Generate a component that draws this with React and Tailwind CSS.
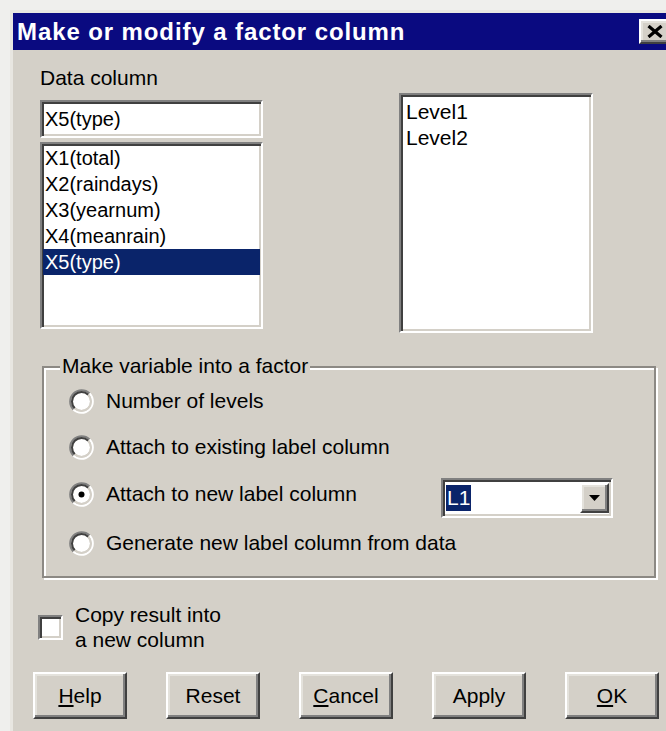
import React, { useState } from "react";

const sunken =
  "bg-white border-2 border-t-[#808080] border-l-[#808080] border-r-white border-b-white shadow-[inset_2px_2px_0_#404040,inset_-2px_-2px_0_#d4d0c8]";
const raised =
  "bg-[#d4d0c8] border-2 border-t-white border-l-white border-r-[#404040] border-b-[#404040] shadow-[inset_-2px_-2px_0_#808080,inset_2px_2px_0_#e4e2dc]";

function Radio({ checked }) {
  return (
    <svg width="25" height="25" viewBox="0 0 25 25" className="shrink-0">
      <path d="M4.37 20.63 A11.5 11.5 0 0 1 20.63 4.37" fill="none" stroke="#808080" strokeWidth="2" />
      <path d="M20.63 4.37 A11.5 11.5 0 0 1 4.37 20.63" fill="none" stroke="#ffffff" strokeWidth="2" />
      <circle cx="12.5" cy="12.5" r="8.5" fill="#ffffff" />
      <path d="M5.78 19.22 A9.5 9.5 0 0 1 19.22 5.78" fill="none" stroke="#404040" strokeWidth="2" />
      <path d="M19.22 5.78 A9.5 9.5 0 0 1 5.78 19.22" fill="none" stroke="#d4d0c8" strokeWidth="2" />
      {checked && <circle cx="12.5" cy="12.5" r="3" fill="#000000" />}
    </svg>
  );
}

function Btn({ children }) {
  return (
    <button className={`${raised} w-[94px] h-[47px] flex items-center justify-center text-[21px] text-black`}>
      {children}
    </button>
  );
}

function App() {
  const [mode, setMode] = useState(2);
  const [copy, setCopy] = useState(false);
  const columns = ["X1(total)", "X2(raindays)", "X3(yearnum)", "X4(meanrain)", "X5(type)"];
  const options = [
    "Number of levels",
    "Attach to existing label column",
    "Attach to new label column",
    "Generate new label column from data",
  ];
  const rowHeights = ["h-[46px]", "h-[46px]", "h-[48px]", "h-[50px]"];

  return (
    <div
      className="w-[666px] h-[731px] overflow-hidden bg-[#efefed] pt-[10px] pl-[10px]"
      style={{ fontFamily: '"Liberation Sans", Arial, sans-serif' }}
    >
      <div className="w-[670px] h-[721px] bg-[#d4d0c8] border-t-[3px] border-l-[3px] border-[#e8e6e1] flex flex-col">
        {/* caption */}
        <div className="h-[37px] bg-[#0a0a80] flex items-center pl-[4px]">
          <span className="text-white font-bold text-[24px] tracking-[0.9px] leading-none">
            Make or modify a factor column
          </span>
          <div className={`${raised} ml-auto mr-[3px] w-[38px] h-[25px] flex items-center justify-start pl-[6px]`}>
            <svg width="16" height="13" viewBox="0 0 16 13">
              <path d="M1.5 1 L14.5 12 M14.5 1 L1.5 12" stroke="#000" strokeWidth="3.2" />
            </svg>
          </div>
        </div>

        {/* column pickers */}
        <div className="flex items-start pl-[27px] text-black">
          <div className="w-[223px] flex flex-col">
            <div className="mt-[16px] text-[21px] leading-[24px]">Data column</div>
            <div className={`${sunken} mt-[10px] h-[38px] flex items-center pl-[3px] text-[20px]`}>X5(type)</div>
            <div className={`${sunken} mt-[4px] h-[187px] pt-[1px] px-[1px] text-[20px] leading-[26px]`}>
              {columns.map((c, i) => (
                <div key={c} className={i === 4 ? "bg-[#0a246a] text-white pl-[2px]" : "pl-[2px]"}>
                  {c}
                </div>
              ))}
            </div>
          </div>
          <div className={`${sunken} ml-[136px] mt-[43px] w-[194px] h-[240px] pt-[4px] pl-[5px] text-[21px] leading-[26px]`}>
            <div>Level1</div>
            <div>Level2</div>
          </div>
        </div>

        {/* factor group */}
        <div className="relative ml-[29px] mt-[33px] w-[614px] h-[212px] border-2 border-[#8c8984] shadow-[2px_2px_0_#ffffff,inset_2px_2px_0_#ffffff] pt-[10px] pl-[25px] text-[21px] text-black">
          <span className="absolute left-[16px] top-[-14px] px-[2px] bg-[#d4d0c8] leading-[24px]">
            Make variable into a factor
          </span>
          {options.map((o, i) => (
            <div key={o} className={`${rowHeights[i]} flex items-center`} onClick={() => setMode(i)}>
              <Radio checked={mode === i} />
              <span className={i === 2 ? "ml-[12px] w-[335px]" : "ml-[12px]"}>{o}</span>
              {i === 2 && (
                <div className={`${sunken} mt-[8px] w-[172px] h-[40px] flex items-center pl-[3px] pr-[2px]`}>
                  <span className="bg-[#0a246a] text-white px-[1px] leading-[26px]">L1</span>
                  <div className={`${raised} ml-auto w-[29px] h-[30px] flex items-center justify-center`}>
                    <svg width="11" height="6" viewBox="0 0 11 6">
                      <polygon points="0,0 11,0 5.5,6" fill="#000" />
                    </svg>
                  </div>
                </div>
              )}
            </div>
          ))}
        </div>

        {/* copy option */}
        <div className="flex items-center ml-[25px] mt-[24px] text-[21px] leading-[25px] text-black" onClick={() => setCopy(!copy)}>
          <div className={`${sunken} w-[25px] h-[25px]`}></div>
          <div className="ml-[12px]">
            <div>Copy result into</div>
            <div>a new column</div>
          </div>
        </div>

        {/* buttons */}
        <div className="flex justify-between ml-[20px] mt-[20px] w-[626px]">
          <Btn>
            <span className="underline underline-offset-2">H</span>elp
          </Btn>
          <Btn>Reset</Btn>
          <Btn>
            <span className="underline underline-offset-2">C</span>ancel
          </Btn>
          <Btn>Apply</Btn>
          <Btn>
            <span className="underline underline-offset-2">O</span>K
          </Btn>
        </div>
      </div>
    </div>
  );
}

export default App;
